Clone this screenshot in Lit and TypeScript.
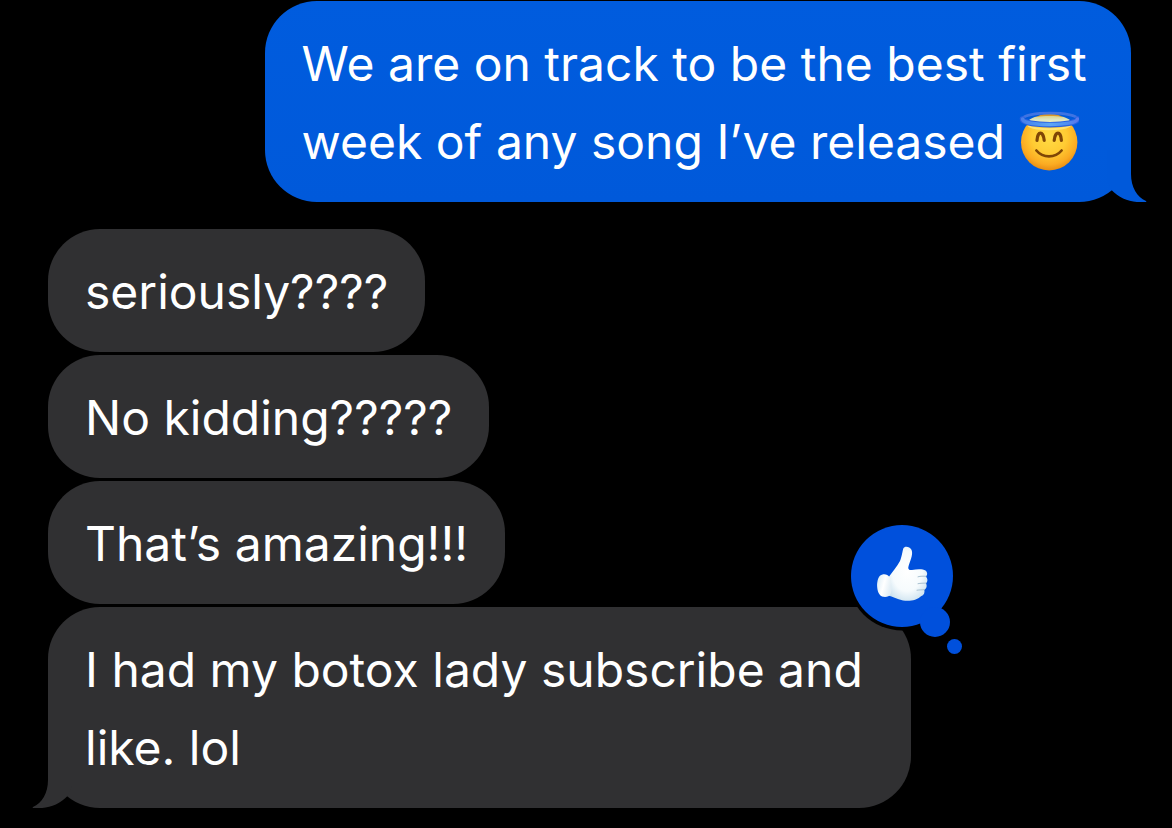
import { LitElement, html, css, svg, nothing } from "lit";
import { customElement, property } from "lit/decorators.js";

type Side = "sent" | "received";

interface Message {
  side: Side;
  text: string;
  halo?: boolean;
  tail?: boolean;
  liked?: boolean;
}

const MESSAGES: Message[] = [
  {
    side: "sent",
    text: "We are on track to be the best first week of any song I’ve released",
    halo: true,
    tail: true,
  },
  { side: "received", text: "seriously????" },
  { side: "received", text: "No kidding?????" },
  { side: "received", text: "That’s amazing!!!" },
  {
    side: "received",
    text: "I had my botox lady subscribe and like. lol",
    tail: true,
    liked: true,
  },
];

/** Smiling face with a blue halo, sized to sit in a line of text. */
@customElement("halo-face")
export class HaloFace extends LitElement {
  static styles = css`
    :host {
      display: inline-block;
      width: 60px;
      height: 60px;
      vertical-align: -12px;
    }
    .art {
      display: block;
      width: 100%;
      height: 100%;
    }
  `;

  render() {
    return html`<svg class="art" viewBox="0 0 60 60" role="img" aria-label="Smiling face with halo">
      <defs>
        <radialGradient id="skin" cx="0.5" cy="0.4" r="0.62">
          <stop offset="0" stop-color="#ffdc45" />
          <stop offset="0.5" stop-color="#ffcb33" />
          <stop offset="0.8" stop-color="#fbab22" />
          <stop offset="1" stop-color="#e58710" />
        </radialGradient>
        <linearGradient id="shine" x1="0" y1="0" x2="0" y2="1">
          <stop offset="0" stop-color="#d9cf7c" />
          <stop offset="0.5" stop-color="#dfe8c4" />
          <stop offset="1" stop-color="#fff0a8" />
        </linearGradient>
        <linearGradient id="ring" x1="0" y1="0" x2="1" y2="0">
          <stop offset="0" stop-color="#4a80ea" />
          <stop offset="0.25" stop-color="#4f93f2" />
          <stop offset="0.5" stop-color="#5ca6f6" />
          <stop offset="0.8" stop-color="#4f8ff0" />
          <stop offset="1" stop-color="#5a78ea" />
        </linearGradient>
      </defs>
      <circle cx="30.2" cy="31.2" r="28.2" fill="url(#skin)" />
      <path d="M10 9C17 2.6 43 2.6 51 9C47 15 14 15 10 9Z" fill="url(#shine)" />
      <path d="M17 6C23 2 38 2 44 6C38 4.6 23 4.6 17 6Z" fill="#d9982a" />
      <path
        d="M10 15.2C18 19.4 42 19.4 50.5 15.2"
        fill="none"
        stroke="#ffeb8f"
        stroke-width="2"
        stroke-linecap="round"
        opacity="0.7"
      />
      <path d="M3.8 8C3.8 .2 58.2 .2 58.2 8" fill="none" stroke="#3f74e2" stroke-width="2.6" />
      <path
        d="M3.4 8C3.4 15.6 58.6 15.6 58.6 8"
        fill="none"
        stroke="#2a62e2"
        stroke-width="5.4"
        stroke-linecap="round"
      />
      <path
        d="M3.6 8C3.6 15.4 58.4 15.4 58.4 8"
        fill="none"
        stroke="url(#ring)"
        stroke-width="3.4"
        stroke-linecap="round"
      />
      <g fill="none" stroke="#7f4606" stroke-linecap="round">
        <path d="M18 29.3C18.6 19.8 24.2 19.8 25.2 29.3" stroke-width="3.2" />
        <path d="M35.2 29.3C36.2 19.8 41.8 19.8 42.4 29.3" stroke-width="3.2" />
        <path d="M17.4 39.5C24 47.4 36 47.4 42.6 39.5" stroke-width="2.7" />
      </g>
    </svg>`;
  }
}

/** Thumbs-up reaction inside a small thought bubble. */
@customElement("like-reaction")
export class LikeReaction extends LitElement {
  static styles = css`
    :host {
      display: block;
      width: 120px;
      height: 136px;
    }
    .art {
      display: block;
      width: 100%;
      height: 100%;
    }
  `;

  render() {
    return html`<svg class="art" viewBox="0 0 120 136" role="img" aria-label="Liked">
      <defs>
        <radialGradient id="hand" cx="0.5" cy="0.45" r="0.62">
          <stop offset="0" stop-color="#ffffff" />
          <stop offset="0.6" stop-color="#f6fbfd" />
          <stop offset="1" stop-color="#c9e0ee" />
        </radialGradient>
        <linearGradient id="cuff" x1="0" y1="0" x2="1" y2="0.4">
          <stop offset="0" stop-color="#d6eaf4" />
          <stop offset="0.55" stop-color="#ffffff" />
          <stop offset="1" stop-color="#e2eef5" />
        </linearGradient>
      </defs>
      <circle cx="55" cy="55" r="54.5" fill="#000" />
      <g fill="#0050dc">
        <circle cx="55" cy="55" r="51" />
        <circle cx="88" cy="101" r="15" />
        <circle cx="107.5" cy="125.5" r="7.5" />
      </g>
      <path
        d="M41 57C45 51 50 46 53 40C55 35 55.5 30 56.3 27.5C57.5 24.8 62.5 25.2 64.6 29C66.5 34 62.5 41 61.3 46.2C61 48.5 62.5 49.3 65 48.9C70 48 76 47.8 78.5 49.5C81 51.5 80.4 54.5 78.7 55.5C81 57.5 81 60.8 78.8 62.3C80.4 64.5 79.8 67.5 77.3 68.8C78 71.5 77 74.3 74 75.3C70 79.6 62 80.3 56 79.4C50 78.4 45 75 40 74.5Z"
        fill="url(#hand)"
      />
      <path
        d="M35.5 53.5C31.5 54 30 60 30.1 65C30.3 70 32 75 36 75.8C39.5 76.3 42.5 75.5 43.5 73C45.5 68 44.5 61 42.8 56.5C41 53.8 38.5 53 35.5 53.5Z"
        fill="url(#cuff)"
      />
      <g fill="none" stroke="#a9c1d1" stroke-width="1" stroke-linecap="round">
        <path d="M71 55.8C74 54.9 76 55.2 79 55.3" />
        <path d="M71 62.7C74 62 76 62.3 79 62.1" />
        <path d="M70 69.2C73 68.7 75 69.1 77.5 68.6" />
      </g>
    </svg>`;
  }
}

@customElement("chat-bubble")
export class ChatBubble extends LitElement {
  @property({ attribute: false }) message!: Message;

  static styles = css`
    :host {
      display: block;
      position: relative;
    }
    .bubble {
      margin: 0;
      padding: 24px 37px 21px;
      border-radius: 52px;
      color: #fff;
      font-size: 48px;
      line-height: 78px;
    }
    .sent {
      background: linear-gradient(#005cde, #0059da);
    }
    .received {
      background: #303032;
    }
    .tail {
      position: absolute;
      bottom: 0;
      width: 40px;
      height: 52px;
    }
    .tail-sent {
      right: -16px;
      fill: #0059da;
    }
    .tail-received {
      left: -16px;
      fill: #303032;
      transform: scaleX(-1);
    }
    .reaction {
      position: absolute;
      top: -86px;
      right: -56px;
    }
  `;

  render() {
    const { side, text, halo, tail, liked } = this.message;
    return html`
      <p class="bubble ${side}">${text}${halo ? html` <halo-face></halo-face>` : nothing}</p>
      ${tail
        ? html`<svg class="tail tail-${side}" viewBox="0 0 40 52" aria-hidden="true">
            ${svg`<path d="M24 0V24C24 37 30 47 39 51C40 51.6 39 52 37 52C25 53 13 49 4.5 40L0 30V0Z" />`}
          </svg>`
        : nothing}
      ${liked ? html`<like-reaction class="reaction"></like-reaction>` : nothing}
    `;
  }
}

@customElement("app-root")
export class AppRoot extends LitElement {
  static styles = css`
    :host {
      display: block;
      box-sizing: border-box;
      min-height: 100vh;
      padding: 1px 41px 20px 48px;
      background: #000;
      font-family: Inter, "Liberation Sans", sans-serif;
    }
    .thread {
      display: flex;
      flex-direction: column;
      gap: 27px;
    }
    .group {
      display: flex;
      flex-direction: column;
      gap: 3px;
    }
    .group-sent {
      align-items: flex-end;
    }
    .group-received {
      align-items: flex-start;
      padding-right: 4px;
    }
    .item {
      max-width: 80%;
    }
  `;

  private renderGroup(side: Side) {
    return html`<section class="group group-${side}">
      ${MESSAGES.filter((m) => m.side === side).map(
        (m) => html`<chat-bubble class="item" .message=${m}></chat-bubble>`
      )}
    </section>`;
  }

  render() {
    return html`<main class="thread">${this.renderGroup("sent")}${this.renderGroup("received")}</main>`;
  }
}
